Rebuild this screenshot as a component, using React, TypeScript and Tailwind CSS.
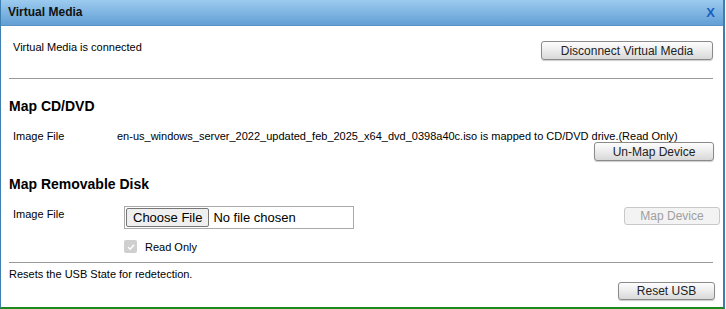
import React from "react";

function Btn({ label, disabled, className }: { label: string; disabled?: boolean; className?: string }) {
  return (
    <button
      disabled={disabled}
      className={`rounded-[3px] border text-[12px] leading-none ${
        disabled
          ? "border-[#c8c8c8] bg-[#f3f3f3] text-[#a0a0a0]"
          : "border-[#8a8a8a] bg-gradient-to-b from-[#fdfdfd] via-[#ececec] to-[#d8d8d8] text-[#222] shadow-[0_1px_1px_rgba(0,0,0,0.2)]"
      } ${className ?? ""}`}
    >
      {label}
    </button>
  );
}

export default function App(): JSX.Element {
  return (
    <div className="w-[726px] h-[309px] bg-white font-['Liberation_Sans',Arial,sans-serif] text-[11px] leading-[13px] text-black">
      <div className="flex h-full w-[725px] flex-col border-l border-r-2 border-[#3f7fb0] border-b-2 border-b-[#1c8a1c]">
        <div className="flex h-[26px] shrink-0 items-center justify-between border-b border-[#5b94c4] bg-gradient-to-b from-[#9ccbef] to-[#629fd5] pl-[7px] pr-[8px]">
          <span className="text-[12px] font-bold text-[#111]">Virtual Media</span>
          <span className="text-[13px] font-bold text-[#1a5fbf]">X</span>
        </div>

        <div className="flex items-start justify-between pl-[12px] pr-[10px] pt-[15px]">
          <span>Virtual Media is connected</span>
          <Btn label="Disconnect Virtual Media" className="h-[19px] w-[172px]" />
        </div>

        <div className="ml-[8px] mr-[10px] mt-[18px] border-t border-[#999]" />

        <div className="mt-[19px] pl-[8px] text-[14px] font-bold leading-[16px]">Map CD/DVD</div>

        <div className="mt-[16px] flex pl-[12px]">
          <span className="w-[104px]">Image File</span>
          <span>en-us_windows_server_2022_updated_feb_2025_x64_dvd_0398a40c.iso is mapped to CD/DVD drive.(Read Only)</span>
        </div>
        <div className="-mt-[1px] flex justify-end pr-[9px]">
          <Btn label="Un-Map Device" className="h-[19px] w-[120px]" />
        </div>

        <div className="mt-[15px] pl-[8px] text-[14px] font-bold leading-[16px]">Map Removable Disk</div>

        <div className="mt-[14px] flex items-start pl-[12px]">
          <span className="w-[111px] pt-[2px]">Image File</span>
          <div className="flex h-[23px] w-[230px] items-center border border-[#a9a9a9] text-[13px]">
            <span className="ml-[1px] flex h-[19px] items-center rounded-[2px] border border-[#767676] bg-[#efefef] px-[6px]">
              Choose File
            </span>
            <span className="ml-[4px]">No file chosen</span>
          </div>
          <div className="ml-auto pr-[3px] pt-[1px]">
            <Btn label="Map Device" disabled className="h-[18px] w-[96px]" />
          </div>
        </div>

        <div className="mt-[11px] flex items-center pl-[123px]">
          <span className="flex h-[13px] w-[13px] items-center justify-center rounded-[2px] bg-[#cfcfcf]">
            <svg viewBox="0 0 12 12" className="h-[10px] w-[10px]">
              <path d="M2.5 6.2 L5 8.6 L9.6 3.4" fill="none" stroke="#fff" strokeWidth="1.8" />
            </svg>
          </span>
          <span className="ml-[8px] translate-y-[1px]">Read Only</span>
        </div>

        <div className="ml-[8px] mr-[10px] mt-[9px] border-t border-[#999]" />

        <div className="mt-[5px] pl-[8px]">Resets the USB State for redetection.</div>
        <div className="mt-[1px] flex justify-end pr-[8px]">
          <Btn label="Reset USB" className="h-[18px] w-[97px]" />
        </div>
      </div>
    </div>
  );
}
